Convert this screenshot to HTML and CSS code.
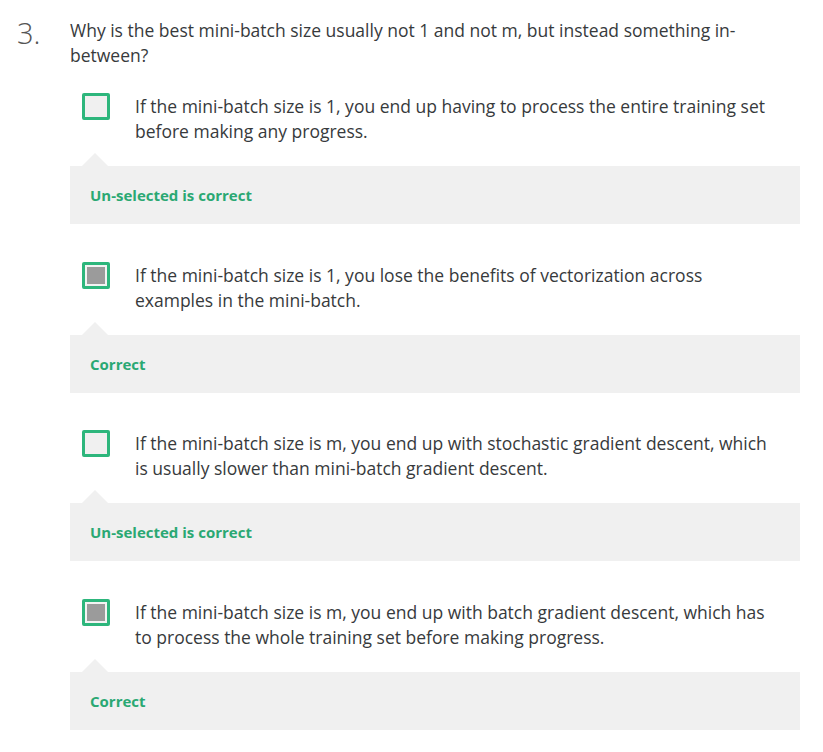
FILE: index.html
```html
<!DOCTYPE html>
<html>
<head>
<meta charset="utf-8">
<link rel="stylesheet" href="styles.css">
</head>
<body>
<div class="question">
  <div class="qnum">3.</div>
  <div class="qbody">
    <div class="qtext">Why is the best mini-batch size usually not 1 and not m, but instead something in-between?</div>
    <div class="options">
      <div class="option">
        <div class="row">
          <span class="box"></span>
          <div class="otext">If the mini-batch size is 1, you end up having to process the entire training set before making any progress.</div>
        </div>
        <div class="feedback">Un-selected is correct</div>
      </div>
      <div class="option">
        <div class="row">
          <span class="box checked"><span class="fill"></span></span>
          <div class="otext">If the mini-batch size is 1, you lose the benefits of vectorization across examples in the mini-batch.</div>
        </div>
        <div class="feedback">Correct</div>
      </div>
      <div class="option">
        <div class="row">
          <span class="box"></span>
          <div class="otext">If the mini-batch size is m, you end up with stochastic gradient descent, which is usually slower than mini-batch gradient descent.</div>
        </div>
        <div class="feedback">Un-selected is correct</div>
      </div>
      <div class="option">
        <div class="row">
          <span class="box checked"><span class="fill"></span></span>
          <div class="otext">If the mini-batch size is m, you end up with batch gradient descent, which has to process the whole training set before making progress.</div>
        </div>
        <div class="feedback">Correct</div>
      </div>
    </div>
  </div>
</div>
</body>
</html>
```

FILE: styles.css
```css
* { box-sizing: border-box; }
body {
  margin: 0;
  background: #fff;
  font-family: "Open Sans", "Liberation Sans", sans-serif;
  color: #373a3c;
}
.question {
  display: flex;
  padding: 18px 0 0 17px;
}
.qnum {
  width: 53px;
  flex: none;
  font-size: 29px;
  font-weight: 300;
  color: #555;
  line-height: 29px;
}
.qbody {
  width: 730px;
}
.qtext {
  font-size: 17.5px;
  line-height: 25px;
  padding-right: 50px;
}
.options {
  margin-top: 25px;
  display: flex;
  flex-direction: column;
  gap: 37.7px;
}
.row {
  display: flex;
  padding-left: 12px;
  gap: 25px;
}
.box {
  flex: none;
  width: 28px;
  height: 27px;
  border: 3px solid #2db67c;
  border-radius: 2px;
  background: #f0f0f0;
  display: flex;
  align-items: center;
  justify-content: center;
}
.box.checked {
  background: #f3f3f3;
}
.fill {
  width: 18px;
  height: 17px;
  background: #9b9b9b;
}
.otext {
  font-size: 17.5px;
  line-height: 25px;
  padding-top: 1px;
  padding-right: 30px;
}
.feedback {
  position: relative;
  margin-top: 22px;
  background: #f0f0f0;
  height: 58px;
  padding: 0 20px;
  display: flex;
  align-items: center;
  font-size: 15px;
  font-weight: 700;
  color: #2aa873;
}
.feedback::before {
  content: "";
  position: absolute;
  left: 12px;
  top: -13px;
  border-left: 13px solid transparent;
  border-right: 13px solid transparent;
  border-bottom: 13px solid #f0f0f0;
}
```
